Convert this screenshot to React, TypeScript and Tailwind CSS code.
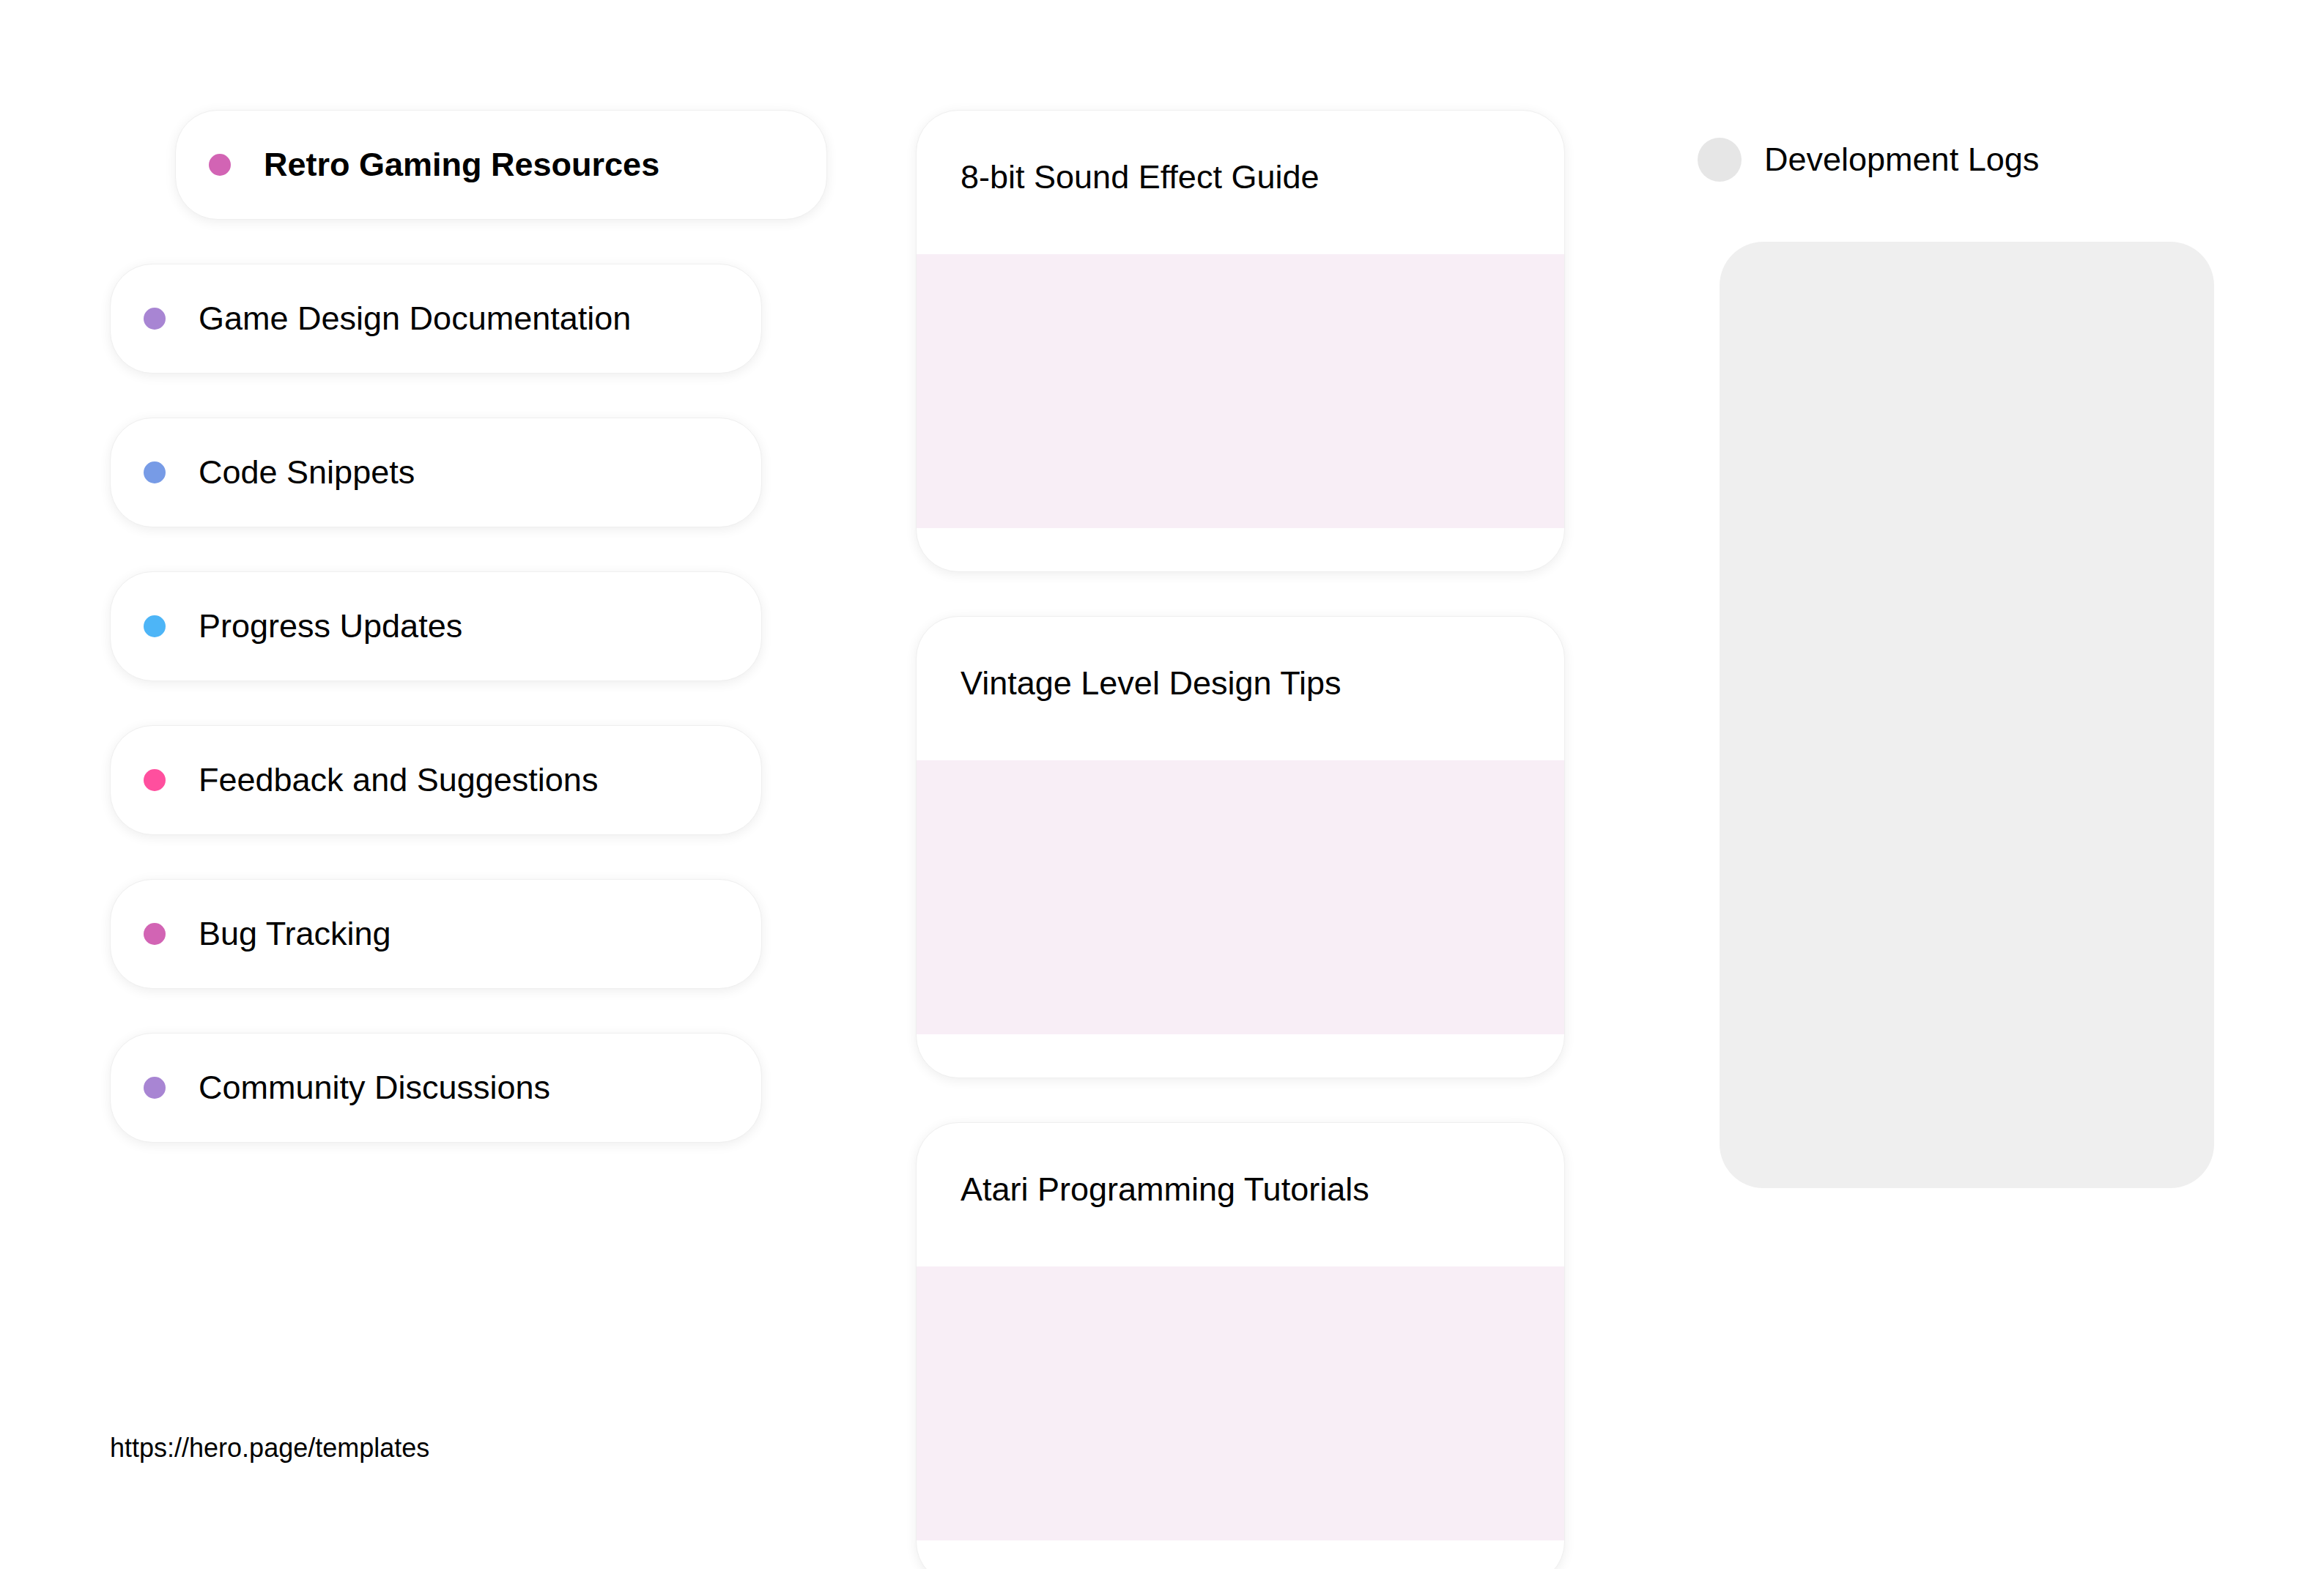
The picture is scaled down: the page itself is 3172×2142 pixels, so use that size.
import React from "react";

const items = [
  { label: "Game Design Documentation", color: "bg-[#a885d3]" },
  { label: "Code Snippets", color: "bg-[#779be6]" },
  { label: "Progress Updates", color: "bg-[#4db5f7]" },
  { label: "Feedback and Suggestions", color: "bg-[#ff4f9e]" },
  { label: "Bug Tracking", color: "bg-[#d264b4]" },
  { label: "Community Discussions", color: "bg-[#a885d3]" },
];

const cards = [
  "8-bit Sound Effect Guide",
  "Vintage Level Design Tips",
  "Atari Programming Tutorials",
];

export default function App() {
  return (
    <div className="min-h-screen bg-white text-black font-['Liberation_Sans',Arial,sans-serif]">
      <div className="flex pl-[150px] pt-[150px]">
        {/* Left column */}
        <div className="flex w-[890px] shrink-0 flex-col">
          <div className="flex flex-col gap-[60px]">
            <div className="flex h-[150px] translate-x-[89px] items-center rounded-[58px] border border-[#efefef] bg-white pl-[45px] shadow-[0_3px_16px_rgba(0,0,0,0.07)]">
              <span className="h-[30px] w-[30px] shrink-0 rounded-full bg-[#d264b4]" />
              <span className="ml-[45px] text-[45px] font-bold leading-[1.15]">
                Retro Gaming Resources
              </span>
            </div>
            {items.map((it) => (
              <div
                key={it.label}
                className="flex h-[150px] items-center rounded-[58px] border border-[#efefef] bg-white pl-[45px] shadow-[0_3px_16px_rgba(0,0,0,0.07)]"
              >
                <span className={`h-[30px] w-[30px] shrink-0 rounded-full ${it.color}`} />
                <span className="ml-[45px] text-[45px] leading-[1.15]">{it.label}</span>
              </div>
            ))}
          </div>
          <div className="mt-[396px] text-[36px] leading-[1.15]">https://hero.page/templates</div>
        </div>

        {/* Middle column */}
        <div className="ml-[210px] flex w-[886px] shrink-0 flex-col gap-[60px] pb-[40px]">
          {cards.map((c) => (
            <div
              key={c}
              className="flex h-[631px] flex-col overflow-hidden rounded-[58px] border border-[#efefef] bg-white shadow-[0_3px_16px_rgba(0,0,0,0.07)]"
            >
              <div className="h-[196px] shrink-0 px-[60px] pt-[57px] text-[45px] leading-[1.5]">{c}</div>
              <div className="h-[374px] shrink-0 bg-[#f8eef6]" />
            </div>
          ))}
        </div>

        {/* Right column */}
        <div className="ml-[181px] flex w-[705px] shrink-0 flex-col">
          <div className="mt-[38px] flex h-[60px] items-center">
            <span className="h-[60px] w-[60px] shrink-0 rounded-full bg-[#e6e6e6]" />
            <span className="ml-[31px] text-[45px] leading-[1.15]">Development Logs</span>
          </div>
          <div className="ml-[30px] mt-[82px] h-[1292px] w-[675px] rounded-[60px] bg-[#efefef]" />
        </div>
      </div>
    </div>
  );
}
